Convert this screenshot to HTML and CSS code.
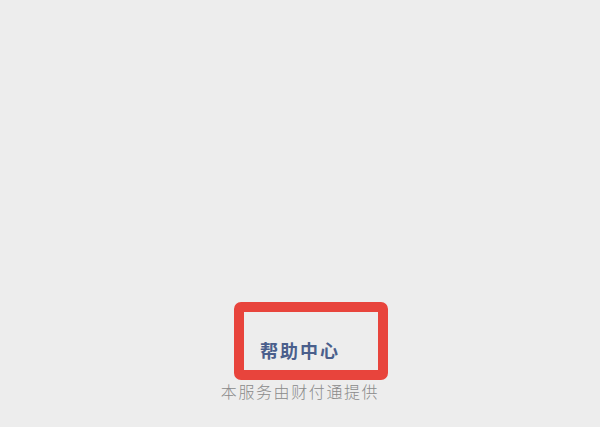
FILE: index.html
```html
<!DOCTYPE html>
<html lang="zh">
<head>
<meta charset="utf-8">
<link rel="stylesheet" href="styles.css">
</head>
<body>
<main class="page">
  <div class="help-box">
    <span class="help-link">帮助中心</span>
  </div>
  <p class="provider">本服务由财付通提供</p>
</main>
</body>
</html>
```
FILE: styles.css
```css
html, body {
  margin: 0;
  padding: 0;
  background: #ededed;
}
.page {
  width: 600px;
  height: 427px;
  box-sizing: border-box;
  padding-top: 302px;
  display: flex;
  flex-direction: column;
  align-items: center;
  font-family: "Noto Sans CJK SC", "Noto Sans", sans-serif;
}
.help-box {
  width: 154px;
  height: 78px;
  box-sizing: border-box;
  margin-left: 22px;
  border: 10px solid #e8443c;
  border-radius: 7px;
  padding: 28px 0 0 16px;
}
.help-link {
  display: block;
  font-size: 18px;
  line-height: 20px;
  font-weight: 700;
  letter-spacing: 2px;
  color: #4a5f8c;
}
.provider {
  margin: 2px 0 0;
  font-size: 16px;
  line-height: 18px;
  letter-spacing: 1.6px;
  color: #8a8a8a;
  font-weight: 300;
}
```
